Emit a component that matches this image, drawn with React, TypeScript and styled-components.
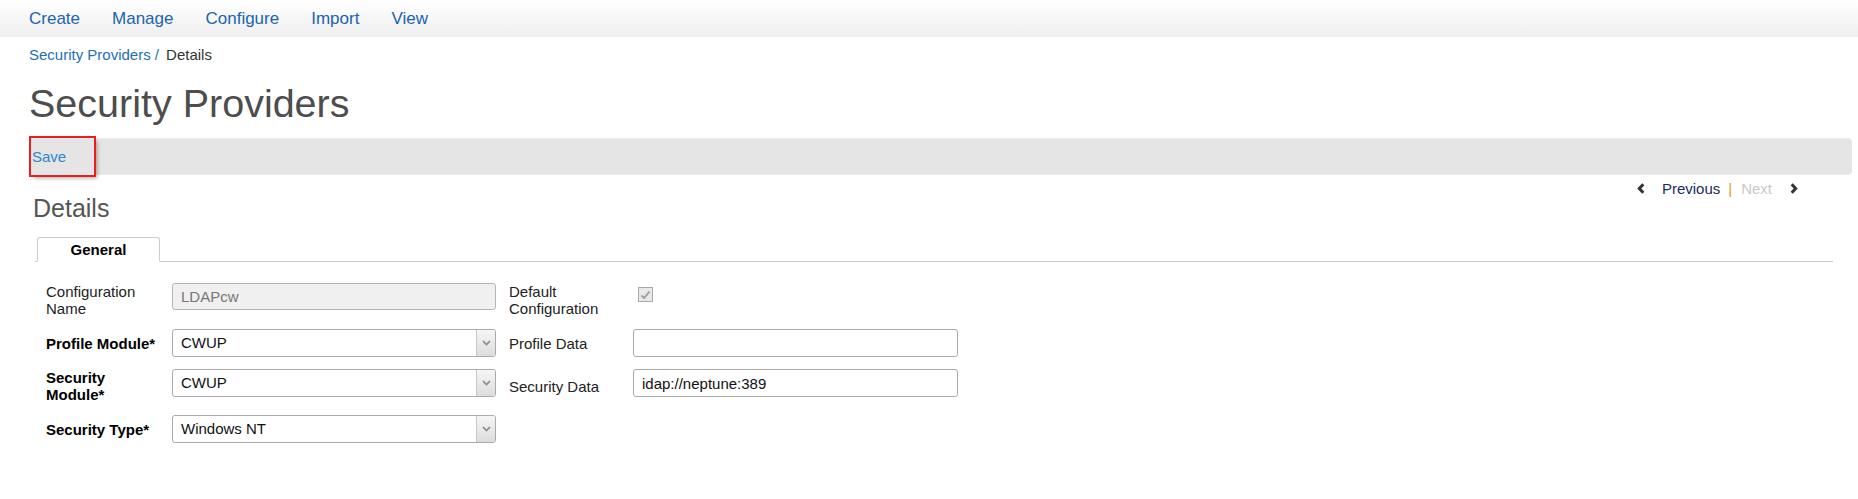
import React from "react";
import styled, { createGlobalStyle } from "styled-components";

const GlobalStyle = createGlobalStyle`
  html, body { margin: 0; padding: 0; background: #fff; }
  body { font-family: "Liberation Sans", Arial, sans-serif; font-size: 15px; color: #333; }
  * { box-sizing: border-box; }
`;

const NavBar = styled.nav`
  height: 37px;
  background: linear-gradient(#ffffff, #efefef);
  display: flex;
  align-items: center;
  padding-left: 29px;
  gap: 32px;
`;

const NavLink = styled.a`
  font-size: 17px;
  line-height: 37px;
  color: #1a64b0;
  text-decoration: none;
`;

const Breadcrumb = styled.div`
  margin-top: 9px;
  padding-left: 29px;
  display: flex;
  gap: 7px;
  font-size: 15px;
  line-height: 17px;
`;

const CrumbLink = styled.a`
  color: #1c6fb8;
  text-decoration: none;
`;

const CrumbCurrent = styled.span`
  color: #333;
`;

const Title = styled.h1`
  margin: 20px 0 0 29px;
  font-size: 39.5px;
  line-height: 40px;
  font-weight: normal;
  color: #4d4d4d;
`;

const Toolbar = styled.div`
  margin: 15px 6px 0 30px;
  height: 37px;
  background: #e5e5e5;
  border-top: 1px solid #ebebeb;
  border-bottom: 1px solid #ebebeb;
  border-radius: 0 4px 4px 0;
  display: flex;
  align-items: center;
`;

const SaveButton = styled.button`
  margin-left: 1px;
  width: 63px;
  height: 37px;
  padding: 0 0 0 1px;
  border: none;
  background: transparent;
  outline: 2px solid #ee1c1c;
  box-shadow: 3px 3px 4px rgba(0, 0, 0, 0.35);
  font-family: inherit;
  font-size: 15px;
  color: #2e86cf;
  text-align: left;
  cursor: pointer;
`;

const HeaderRow = styled.div`
  display: flex;
  justify-content: space-between;
  align-items: flex-start;
  padding: 0 60px 0 33px;
`;

const SectionHeading = styled.h2`
  margin: 19px 0 0;
  font-size: 25px;
  line-height: 28px;
  font-weight: normal;
  color: #555;
`;

const Pager = styled.div`
  margin-top: 5px;
  display: flex;
  align-items: center;
  font-size: 15px;
  line-height: 17px;
`;

const PagerLink = styled.span<{ $disabled?: boolean }>`
  color: ${(p) => (p.$disabled ? "#c8c8c8" : "#1b2a5c")};
`;

const PagerSep = styled.span`
  color: #e39a2e;
  margin: 0 9px 0 8px;
`;

const ChevronBox = styled.span<{ $gap: string }>`
  display: inline-flex;
  align-items: center;
  margin: ${(p) => p.$gap};
`;

const TabStrip = styled.div`
  margin: 15px 25px 0 35px;
  padding-left: 2px;
  border-bottom: 1px solid #ccc;
  display: flex;
`;

const Tab = styled.div`
  width: 123px;
  height: 25px;
  margin-bottom: -1px;
  border: 1px solid #ccc;
  border-bottom: 1px solid #fff;
  border-radius: 3px 3px 0 0;
  background: #fff;
  font-weight: bold;
  font-size: 15px;
  line-height: 23px;
  color: #000;
  text-align: center;
`;

const FormGrid = styled.div`
  margin-top: 21px;
  padding-left: 46px;
  display: grid;
  grid-template-columns: 126px 337px 124px 325px;
  row-gap: 12px;
`;

const Label = styled.label<{ $bold?: boolean }>`
  align-self: center;
  padding-right: 10px;
  font-size: 15px;
  line-height: 17px;
  color: ${(p) => (p.$bold ? "#000" : "#222")};
  font-weight: ${(p) => (p.$bold ? "bold" : "normal")};
`;

const TextInput = styled.input<{ $w: number }>`
  align-self: start;
  width: ${(p) => p.$w}px;
  height: 28px;
  padding: 0 8px;
  border: 1px solid #aaa;
  border-radius: 3px;
  background: #fff;
  font-family: inherit;
  font-size: 15px;
  color: #111;
  outline: none;
  &:disabled {
    height: 27px;
    background: #f0f0f0;
    border-color: #b5b5b5;
    color: #777;
  }
`;

const SelectBox = styled.div`
  align-self: start;
  width: 324px;
  height: 28px;
  display: flex;
  border: 1px solid #aaa;
  border-radius: 3px;
  background: #fff;
  overflow: hidden;
`;

const SelectValue = styled.span`
  flex: 1;
  padding-left: 8px;
  font-size: 15px;
  line-height: 26px;
  color: #111;
`;

const SelectArrow = styled.span`
  width: 19px;
  border-left: 1px solid #c8c8c8;
  background: linear-gradient(#f6f6f6, #dcdcdc);
  display: flex;
  align-items: center;
  justify-content: center;
`;

const CheckBox = styled.span`
  align-self: start;
  margin: 4px 0 0 5px;
  width: 15px;
  height: 15px;
  border: 1px solid #a8a8a8;
  background: #e9e9e9;
  display: flex;
  align-items: center;
  justify-content: center;
`;

const ChevronLeft = () => (
  <svg width="8" height="11" viewBox="0 0 8 11">
    <path d="M6.3 1.2 L2.3 5.5 L6.3 9.8" stroke="#333" strokeWidth="3" fill="none" />
  </svg>
);

const ChevronRight = () => (
  <svg width="8" height="11" viewBox="0 0 8 11">
    <path d="M1.7 1.2 L5.7 5.5 L1.7 9.8" stroke="#333" strokeWidth="3" fill="none" />
  </svg>
);

const Select = ({ value }: { value: string }) => (
  <SelectBox>
    <SelectValue>{value}</SelectValue>
    <SelectArrow>
      <svg width="9" height="6" viewBox="0 0 9 6">
        <path d="M1 1 L4.5 4.6 L8 1" stroke="#8a8a8a" strokeWidth="1.7" fill="none" />
      </svg>
    </SelectArrow>
  </SelectBox>
);

export default function App() {
  return (
    <>
      <GlobalStyle />
      <NavBar>
        <NavLink>Create</NavLink>
        <NavLink>Manage</NavLink>
        <NavLink>Configure</NavLink>
        <NavLink>Import</NavLink>
        <NavLink>View</NavLink>
      </NavBar>
      <Breadcrumb>
        <CrumbLink>Security Providers /</CrumbLink>
        <CrumbCurrent>Details</CrumbCurrent>
      </Breadcrumb>
      <Title>Security Providers</Title>
      <Toolbar>
        <SaveButton>Save</SaveButton>
      </Toolbar>
      <HeaderRow>
        <SectionHeading>Details</SectionHeading>
        <Pager>
          <ChevronBox $gap="0 17px 0 0">
            <ChevronLeft />
          </ChevronBox>
          <PagerLink>Previous</PagerLink>
          <PagerSep>|</PagerSep>
          <PagerLink $disabled>Next</PagerLink>
          <ChevronBox $gap="0 0 0 18px">
            <ChevronRight />
          </ChevronBox>
        </Pager>
      </HeaderRow>
      <TabStrip>
        <Tab>General</Tab>
      </TabStrip>
      <FormGrid>
        <Label>Configuration Name</Label>
        <TextInput $w={324} disabled value="LDAPcw" readOnly />
        <Label>Default Configuration</Label>
        <CheckBox>
          <svg width="11" height="10" viewBox="0 0 11 10">
            <path d="M1.5 5.5 L4.2 8 L9.5 1.5" stroke="#9a9a9a" strokeWidth="1.8" fill="none" />
          </svg>
        </CheckBox>

        <Label $bold>Profile Module*</Label>
        <Select value="CWUP" />
        <Label>Profile Data</Label>
        <TextInput $w={325} value="" readOnly />

        <Label $bold>Security Module*</Label>
        <Select value="CWUP" />
        <Label>Security Data</Label>
        <TextInput $w={325} value="idap://neptune:389" readOnly />

        <Label $bold>Security Type*</Label>
        <Select value="Windows NT" />
      </FormGrid>
    </>
  );
}
